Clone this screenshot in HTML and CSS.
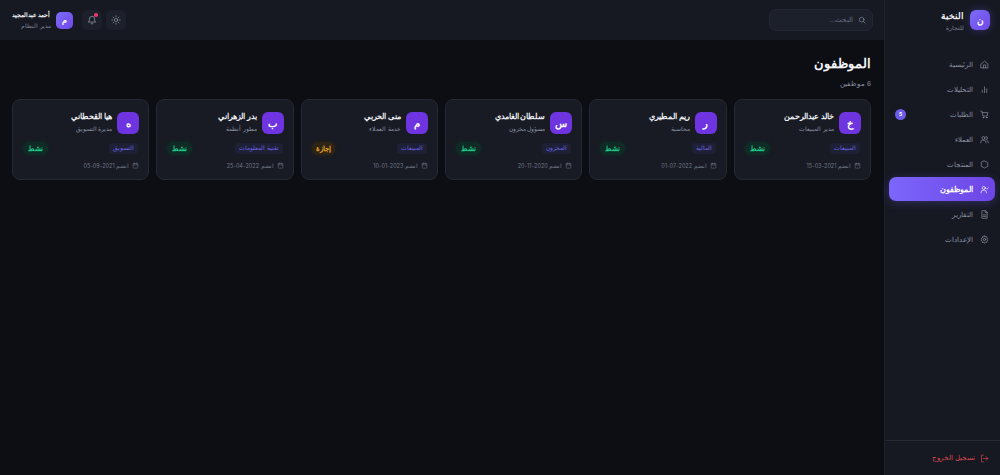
FILE: index.html
```html
<!DOCTYPE html>
<html lang="ar" dir="rtl">
<head>
  <meta charset="UTF-8">
  <title>الموظفون</title>
  <link rel="stylesheet" href="styles.css">
</head>
<body>
  <aside class="sidebar">
    <div class="brand">
      <div class="brand-logo">ن</div>
      <div class="brand-text">
        <div class="brand-name">النخبة</div>
        <div class="brand-sub">للتجارة</div>
      </div>
    </div>

    <nav class="nav">
      <a class="nav-item">
        <svg viewBox="0 0 24 24"><path d="M3 10.500 12 3l9 7.500V21H3z"/><path d="M9 21v-8h6v8"/></svg>
        <span>الرئيسية</span>
      </a>
      <a class="nav-item">
        <svg viewBox="0 0 24 24"><line x1="6" y1="20" x2="6" y2="14"/><line x1="12" y1="20" x2="12" y2="5"/><line x1="18" y1="20" x2="18" y2="10"/></svg>
        <span>التحليلات</span>
      </a>
      <a class="nav-item">
        <svg viewBox="0 0 24 24"><circle cx="9" cy="20" r="1.300"/><circle cx="18" cy="20" r="1.300"/><path d="M2 3h3l3 13h11l2-9H6"/></svg>
        <span>الطلبات</span>
        <b class="nav-badge">5</b>
      </a>
      <a class="nav-item">
        <svg viewBox="0 0 24 24"><circle cx="9" cy="8" r="4"/><path d="M2 21v-2a5 5 0 0 1 5-5h4a5 5 0 0 1 5 5v2"/><path d="M16 4a4 4 0 0 1 0 8"/><path d="M22 21v-2a5 5 0 0 0-3-4.500"/></svg>
        <span>العملاء</span>
      </a>
      <a class="nav-item">
        <svg viewBox="0 0 24 24"><path d="M12 2.500 20.500 7v10L12 21.500 3.500 17V7z"/></svg>
        <span>المنتجات</span>
      </a>
      <a class="nav-item active">
        <svg viewBox="0 0 24 24"><circle cx="10" cy="8" r="4"/><path d="M3 21v-2a5 5 0 0 1 5-5h4a5 5 0 0 1 5 5v2"/><path d="m16 9 2 2 4-4"/></svg>
        <span>الموظفون</span>
      </a>
      <a class="nav-item">
        <svg viewBox="0 0 24 24"><path d="M14 2H5v20h14V7z"/><path d="M14 2v5h5"/><line x1="8" y1="13" x2="16" y2="13"/><line x1="8" y1="17" x2="16" y2="17"/></svg>
        <span>التقارير</span>
      </a>
      <a class="nav-item">
        <svg viewBox="0 0 24 24"><circle cx="12" cy="12" r="3"/><path d="M12 2l2 3 3.500-.5.500 3.500 3 2-2 2 2 2.500-3 2-.5 3.500-3.500-.5-2 3-2-3-3.500.5-.5-3.500-3-2 2-2.500-2-2 3-2 .5-3.500 3.500.5z"/></svg>
        <span>الإعدادات</span>
      </a>
    </nav>

    <div class="sidebar-footer">
      <a class="logout">
        <svg viewBox="0 0 24 24"><path d="M9 3H4v18h5"/><line x1="9" y1="12" x2="21" y2="12"/><polyline points="16 7 21 12 16 17"/></svg>
        <span>تسجيل الخروج</span>
      </a>
    </div>
  </aside>

  <div class="page">
    <header class="topbar">
      <div class="search">
        <svg viewBox="0 0 24 24"><circle cx="11" cy="11" r="7"/><line x1="21" y1="21" x2="16" y2="16"/></svg>
        <span>البحث...</span>
      </div>
      <div class="top-actions">
        <button class="icon-btn">
          <svg viewBox="0 0 24 24"><circle cx="12" cy="12" r="4"/><path d="M12 2v2M12 20v2M2 12h2M20 12h2M5 5l1.500 1.500M17.500 17.500 19 19M5 19l1.500-1.500M17.500 6.500 19 5"/></svg>
        </button>
        <button class="icon-btn">
          <svg viewBox="0 0 24 24"><path d="M6 9a6 6 0 0 1 12 0c0 7 3 8 3 8H3s3-1 3-8"/><path d="M10 21h4"/></svg>
          <i class="dot"></i>
        </button>
        <div class="user">
          <div class="user-avatar">م</div>
          <div class="user-text">
            <div class="user-name">أحمد عبدالمجيد</div>
            <div class="user-role">مدير النظام</div>
          </div>
        </div>
      </div>
    </header>

    <main class="content">
      <h1 class="title">الموظفون</h1>
      <p class="count">6 موظفين</p>

      <div class="cards">
        <div class="card">
          <div class="card-head">
            <div class="avatar">خ</div>
            <div>
              <div class="name">خالد عبدالرحمن</div>
              <div class="job">مدير المبيعات</div>
            </div>
          </div>
          <div class="card-tags">
            <span class="tag">المبيعات</span>
            <span class="status">نشط</span>
          </div>
          <div class="joined">
            <svg viewBox="0 0 24 24"><rect x="4" y="5" width="16" height="16" rx="2"/><path d="M4 10h16M8 3v4M16 3v4"/></svg>
            <span>انضم 2021-03-15</span>
          </div>
        </div>

        <div class="card">
          <div class="card-head">
            <div class="avatar">ر</div>
            <div>
              <div class="name">ريم المطيري</div>
              <div class="job">محاسبة</div>
            </div>
          </div>
          <div class="card-tags">
            <span class="tag">المالية</span>
            <span class="status">نشط</span>
          </div>
          <div class="joined">
            <svg viewBox="0 0 24 24"><rect x="4" y="5" width="16" height="16" rx="2"/><path d="M4 10h16M8 3v4M16 3v4"/></svg>
            <span>انضم 2022-07-01</span>
          </div>
        </div>

        <div class="card">
          <div class="card-head">
            <div class="avatar">س</div>
            <div>
              <div class="name">سلطان الغامدي</div>
              <div class="job">مسؤول مخزون</div>
            </div>
          </div>
          <div class="card-tags">
            <span class="tag">المخزون</span>
            <span class="status">نشط</span>
          </div>
          <div class="joined">
            <svg viewBox="0 0 24 24"><rect x="4" y="5" width="16" height="16" rx="2"/><path d="M4 10h16M8 3v4M16 3v4"/></svg>
            <span>انضم 2020-11-20</span>
          </div>
        </div>

        <div class="card">
          <div class="card-head">
            <div class="avatar">م</div>
            <div>
              <div class="name">منى الحربي</div>
              <div class="job">خدمة العملاء</div>
            </div>
          </div>
          <div class="card-tags">
            <span class="tag">المبيعات</span>
            <span class="status leave">إجازة</span>
          </div>
          <div class="joined">
            <svg viewBox="0 0 24 24"><rect x="4" y="5" width="16" height="16" rx="2"/><path d="M4 10h16M8 3v4M16 3v4"/></svg>
            <span>انضم 2023-01-10</span>
          </div>
        </div>

        <div class="card">
          <div class="card-head">
            <div class="avatar">ب</div>
            <div>
              <div class="name">بدر الزهراني</div>
              <div class="job">مطور أنظمة</div>
            </div>
          </div>
          <div class="card-tags">
            <span class="tag">تقنية المعلومات</span>
            <span class="status">نشط</span>
          </div>
          <div class="joined">
            <svg viewBox="0 0 24 24"><rect x="4" y="5" width="16" height="16" rx="2"/><path d="M4 10h16M8 3v4M16 3v4"/></svg>
            <span>انضم 2022-04-25</span>
          </div>
        </div>

        <div class="card">
          <div class="card-head">
            <div class="avatar">ه</div>
            <div>
              <div class="name">هيا القحطاني</div>
              <div class="job">مديرة التسويق</div>
            </div>
          </div>
          <div class="card-tags">
            <span class="tag">التسويق</span>
            <span class="status">نشط</span>
          </div>
          <div class="joined">
            <svg viewBox="0 0 24 24"><rect x="4" y="5" width="16" height="16" rx="2"/><path d="M4 10h16M8 3v4M16 3v4"/></svg>
            <span>انضم 2021-09-05</span>
          </div>
        </div>
      </div>
    </main>
  </div>
</body>
</html>
```

FILE: styles.css
```css
* {
  margin: 0;
  padding: 0;
  box-sizing: border-box;
}

html, body {
  height: 100%;
  overflow: hidden;
}

body {
  display: flex;
  font-family: "Inter", "Noto Sans", sans-serif;
  background: #0c0e14;
  color: #fff;
}

svg {
  fill: none;
  stroke: currentColor;
  stroke-width: 1.8;
  stroke-linecap: round;
  stroke-linejoin: round;
  flex-shrink: 0;
}

/* Sidebar */
.sidebar {
  width: 116px;
  flex-shrink: 0;
  display: flex;
  flex-direction: column;
  background: #161922;
  border-left: 1px solid #1d212b;
}

.brand {
  height: 40px;
  padding: 0 10px;
  display: flex;
  align-items: center;
  gap: 6px;
  margin-bottom: 12px;
}

.brand-logo {
  width: 20px;
  height: 20px;
  border-radius: 6px;
  background: linear-gradient(135deg, #7c6cf8, #7048e8);
  display: flex;
  align-items: center;
  justify-content: center;
  font-size: 9px;
  font-weight: bold;
  box-shadow: 0 0 8px rgba(108, 92, 231, .35);
}

.brand-text {
  padding-top: 3px;
}

.brand-name {
  font-size: 8.500px;
  font-weight: bold;
  line-height: 12px;
  color: #f1f2f6;
}

.brand-sub {
  font-size: 6px;
  line-height: 12px;
  color: #7c8292;
}

.nav {
  display: flex;
  flex-direction: column;
  gap: 1px;
  padding: 0 5px 0 4px;
}

.nav-item {
  height: 24px;
  padding: 0 6px;
  display: flex;
  align-items: center;
  gap: 7px;
  border-radius: 7px;
  font-size: 6.800px;
  color: #8d93a3;
}

.nav-item svg {
  width: 9px;
  height: 9px;
}

.nav-badge {
  margin-right: auto;
  width: 11px;
  height: 11px;
  border-radius: 50%;
  background: #6c5ce7;
  color: #fff;
  font-size: 5px;
  display: flex;
  align-items: center;
  justify-content: center;
}

.nav-item.active {
  background: linear-gradient(270deg, #6d45e6, #7c66fb);
  color: #fff;
  font-weight: bold;
  font-size: 7.500px;
  box-shadow: 0 2px 10px rgba(108, 92, 231, .3);
}

.sidebar-footer {
  margin-top: auto;
  height: 35px;
  border-top: 1px solid #252a36;
  padding: 0 11px;
  display: flex;
  align-items: center;
}

.logout {
  display: flex;
  align-items: center;
  gap: 5px;
  font-size: 6.500px;
  color: #d9484f;
}

.logout svg {
  width: 9px;
  height: 9px;
}

/* Top bar */
.page {
  flex: 1;
  min-width: 0;
  display: flex;
  flex-direction: column;
}

.topbar {
  height: 40px;
  padding: 0 11px 0 12px;
  display: flex;
  align-items: center;
  justify-content: space-between;
  background: #161922;
}

.search {
  width: 104px;
  height: 22px;
  padding: 0 6px;
  display: flex;
  align-items: center;
  gap: 5px;
  border-radius: 7px;
  background: #1c202b;
  border: 1px solid #232733;
  color: #6b7181;
  font-size: 6.500px;
}

.search svg {
  width: 8px;
  height: 8px;
  color: #8d93a3;
}

.top-actions {
  display: flex;
  align-items: center;
  gap: 4px;
}

.icon-btn {
  position: relative;
  width: 20px;
  height: 20px;
  border: 0;
  border-radius: 6px;
  background: #1c202b;
  color: #9399a8;
  display: flex;
  align-items: center;
  justify-content: center;
}

.icon-btn svg {
  width: 10px;
  height: 10px;
}

.dot {
  position: absolute;
  top: 3px;
  left: 12.500px;
  width: 3.500px;
  height: 3.500px;
  border-radius: 50%;
  background: #e8366b;
}

.user {
  display: flex;
  align-items: center;
  gap: 5px;
  margin-right: 5px;
}

.user-avatar {
  width: 17px;
  height: 17px;
  border-radius: 5px;
  background: linear-gradient(135deg, #7c6cf8, #7048e8);
  display: flex;
  align-items: center;
  justify-content: center;
  font-size: 8px;
  font-weight: bold;
}

.user-name {
  font-size: 6.300px;
  font-weight: bold;
  line-height: 11px;
  color: #f1f2f6;
}

.user-role {
  font-size: 5.500px;
  line-height: 10px;
  color: #7c8292;
}

/* Content */
.content {
  flex: 1;
  padding: 13px 13px 0 12px;
}

.title {
  font-size: 13px;
  font-weight: bold;
  line-height: 20px;
  color: #f4f5f8;
}

.count {
  margin-top: 6px;
  font-size: 6.500px;
  line-height: 10px;
  color: #8d93a3;
}

.cards {
  margin-top: 10px;
  display: grid;
  grid-template-columns: repeat(6, 1fr);
  gap: 7.200px;
}

.card {
  height: 81px;
  padding: 11px 9px 0 9px;
  border-radius: 8px;
  background: #181b24;
  border: 1px solid #252934;
}

.card-head {
  display: flex;
  align-items: center;
  gap: 5px;
}

.avatar {
  width: 22px;
  height: 22px;
  border-radius: 6px;
  background: #6d34df;
  display: flex;
  align-items: center;
  justify-content: center;
  font-size: 10px;
  font-weight: bold;
  flex-shrink: 0;
}

.name {
  font-size: 7.500px;
  font-weight: bold;
  line-height: 12px;
  color: #f1f2f6;
}

.job {
  font-size: 5.800px;
  line-height: 11px;
  color: #8d93a3;
}

.card-tags {
  margin-top: 8px;
  display: flex;
  align-items: center;
  justify-content: space-between;
}

.tag {
  padding: 0 4px;
  height: 11px;
  line-height: 11px;
  border-radius: 4px;
  background: #1e2036;
  color: #6f66e6;
  font-size: 5.500px;
  margin-right: 1px;
}

.status {
  padding: 0 5px;
  height: 13px;
  line-height: 13px;
  border-radius: 6px;
  background: #0f2b26;
  box-shadow: 0 0 4px rgba(15, 43, 38, .9);
  color: #1fc98a;
  font-size: 7px;
  font-weight: bold;
  margin-left: 1px;
}

.status.leave {
  padding: 0 4px;
  background: #2e2415;
  box-shadow: 0 0 4px rgba(46, 36, 21, .9);
  color: #eda728;
}

.joined {
  margin-top: 7px;
  display: flex;
  align-items: center;
  gap: 3px;
  font-size: 5.500px;
  color: #6f7584;
}

.joined svg {
  width: 7px;
  height: 7px;
}
```
